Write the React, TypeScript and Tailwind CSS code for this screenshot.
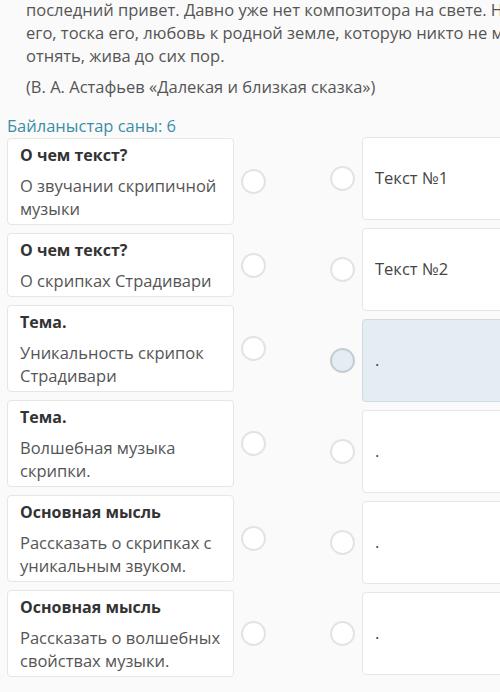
import React from "react";

// Left column items (question cards)
const leftItems = [
  { title: "О чем текст?", text: "О звучании скрипичной музыки" },
  { title: "О чем текст?", text: "О скрипках Страдивари" },
  { title: "Тема.", text: "Уникальность скрипок Страдивари" },
  { title: "Тема.", text: "Волшебная музыка скрипки." },
  { title: "Основная мысль", text: "Рассказать о скрипках с уникальным звуком." },
  { title: "Основная мысль", text: "Рассказать о волшебных свойствах музыки." },
];

// Right column items (answers)
const rightItems = [
  { label: "Текст №1", active: false },
  { label: "Текст №2", active: false },
  { label: ".", active: true },
  { label: ".", active: false },
  { label: ".", active: false },
  { label: ".", active: false },
];

const Circle = ({ active = false }: { active?: boolean }) => (
  <div
    className={
      active
        ? "w-[25px] h-[25px] shrink-0 rounded-full border-2 border-[#c3cdd2] bg-[#e4edf1]"
        : "w-[25px] h-[25px] shrink-0 rounded-full border-2 border-[#e3e3e3] bg-white"
    }
  />
);

export default function App() {
  return (
    <div
      className="w-[500px] h-[692px] overflow-hidden bg-[#fafafa] text-[#555]"
      style={{ fontFamily: '"Open Sans", "Noto Sans", sans-serif' }}
    >
      {/* Reading text */}
      <div className="pl-[26px] -mt-[2px] text-[16.5px] leading-[23px] whitespace-nowrap">
        <p>последний привет. Давно уже нет композитора на свете. Но музыка</p>
        <p>его, тоска его, любовь к родной земле, которую никто не может</p>
        <p>отнять, жива до сих пор.</p>
        <p className="mt-2">(В. А. Астафьев «Далекая и близкая сказка»)</p>
      </div>

      {/* Counter */}
      <div className="pl-[7px] mt-4 text-[16.5px] leading-[23px] text-[#3b8ea6]">
        Байланыстар саны: 6
      </div>

      {/* Matching columns */}
      <div className="flex items-start mt-px pl-[7px]">
        {/* Left column */}
        <div className="flex flex-col gap-2">
          {leftItems.map((item, i) => (
            <div key={i} className="flex items-center gap-[7px]">
              <div className="w-[227px] bg-white border border-[#e6e6e6] rounded-[4px] px-3 pt-1 pb-1">
                <div className="text-[16px] leading-6 font-bold text-[#333]">{item.title}</div>
                <div className="mt-[7px] text-[16.5px] leading-[23px] text-[#555]">{item.text}</div>
              </div>
              <Circle />
            </div>
          ))}
        </div>

        {/* Right column */}
        <div className="flex flex-col gap-2 ml-[64px] -mt-px">
          {rightItems.map((item, i) => (
            <div key={i} className="flex items-center gap-[7px]">
              <Circle active={item.active} />
              <div
                className={
                  item.active
                    ? "w-[200px] h-[83px] shrink-0 flex items-center px-3 rounded-[4px] border border-[#cfdbe1] bg-[#e4edf1] text-[16.5px] text-[#444]"
                    : "w-[200px] h-[83px] shrink-0 flex items-center px-3 rounded-[4px] border border-[#e6e6e6] bg-white text-[16.5px] text-[#444]"
                }
              >
                {item.label}
              </div>
            </div>
          ))}
        </div>
      </div>
    </div>
  );
}
